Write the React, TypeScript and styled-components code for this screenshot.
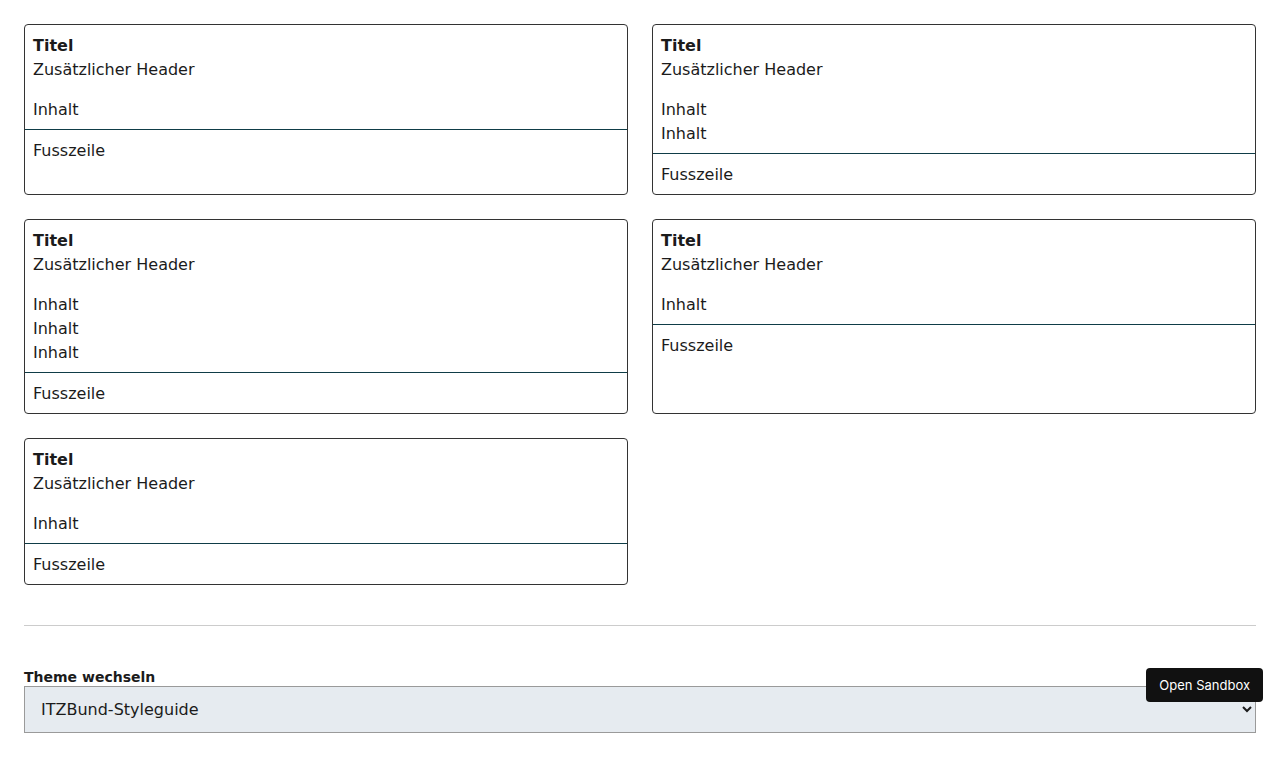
import React from 'react';
import styled, { createGlobalStyle } from 'styled-components';

const GlobalStyle = createGlobalStyle`
    body {
        margin: 0;
        background: #ffffff;
        color: #1b1b1b;
        font-family: "DejaVu Sans", Verdana, sans-serif;
    }
`;

const Page = styled.div`
    padding: 24px;
`;

const CardGrid = styled.div`
    display: grid;
    grid-template-columns: 1fr 1fr;
    gap: 24px;
`;

const Card = styled.div`
    display: flex;
    flex-direction: column;
    border: 1px solid #333;
    border-radius: 4px;
    font-size: 16px;
    line-height: 24px;
`;

const CardHeader = styled.div`
    padding: 9px 8px 0;
`;

const CardTitle = styled.div`
    font-weight: bold;
`;

const CardBody = styled.div`
    padding: 16px 8px 7px;
    border-bottom: 1px solid #0f3d47;
`;

const CardFooter = styled.div`
    flex: 1;
    padding: 9px 8px 7px;
`;

const Divider = styled.hr`
    border: none;
    border-top: 1px solid #cccccc;
    margin: 40px 0 42px;
`;

const Label = styled.label`
    display: block;
    font-size: 14px;
    line-height: 18px;
    font-weight: bold;
`;

const Select = styled.select`
    display: block;
    width: 100%;
    height: 47px;
    padding: 0 12px;
    border: 1px solid #9a9a9a;
    border-radius: 0;
    background: #e6ebf0;
    color: #1b1b1b;
    font-family: "DejaVu Sans", Verdana, sans-serif;
    font-size: 16px;
`;

const SandboxButton = styled.button`
    position: fixed;
    right: 17px;
    bottom: 55px;
    height: 34px;
    padding: 0 13px;
    border: none;
    border-radius: 4px;
    background: #111111;
    color: #ffffff;
    font-family: Inter, "Liberation Sans", sans-serif;
    font-size: 13px;
    cursor: pointer;
`;

// number of "Inhalt" lines per card
const cards = [1, 2, 3, 1, 1];

const App: React.FC = () => {
    return (
        <Page>
            <GlobalStyle />
            <CardGrid>
                {cards.map((count, i) => (
                    <Card key={i}>
                        <CardHeader>
                            <CardTitle>Titel</CardTitle>
                            <div>Zusätzlicher Header</div>
                        </CardHeader>
                        <CardBody>
                            {Array.from({ length: count }).map((_, j) => (
                                <div key={j}>Inhalt</div>
                            ))}
                        </CardBody>
                        <CardFooter>Fusszeile</CardFooter>
                    </Card>
                ))}
            </CardGrid>
            <Divider />
            <Label htmlFor="theme">Theme wechseln</Label>
            <Select id="theme" defaultValue="itzbund">
                <option value="itzbund">ITZBund-Styleguide</option>
            </Select>
            <SandboxButton>Open Sandbox</SandboxButton>
        </Page>
    );
};

export default App;
